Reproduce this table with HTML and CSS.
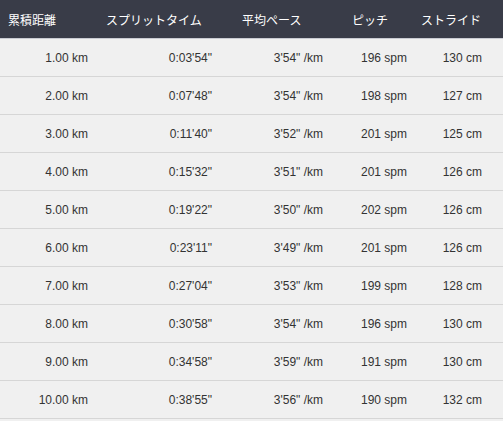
FILE: index.html
```html
<!DOCTYPE html>
<html lang="ja">
<head>
<meta charset="utf-8">
<link rel="stylesheet" href="styles.css">
</head>
<body>
<div class="table">
  <div class="row head">
    <div class="c c1">累積距離</div>
    <div class="c c2">スプリットタイム</div>
    <div class="c c3">平均ペース</div>
    <div class="c c4">ピッチ</div>
    <div class="c c5">ストライド</div>
  </div>
  <div class="row"><div class="c c1">1.00 km</div><div class="c c2">0:03'54"</div><div class="c c3">3'54" /km</div><div class="c c4">196 spm</div><div class="c c5">130 cm</div></div>
  <div class="row"><div class="c c1">2.00 km</div><div class="c c2">0:07'48"</div><div class="c c3">3'54" /km</div><div class="c c4">198 spm</div><div class="c c5">127 cm</div></div>
  <div class="row"><div class="c c1">3.00 km</div><div class="c c2">0:11'40"</div><div class="c c3">3'52" /km</div><div class="c c4">201 spm</div><div class="c c5">125 cm</div></div>
  <div class="row"><div class="c c1">4.00 km</div><div class="c c2">0:15'32"</div><div class="c c3">3'51" /km</div><div class="c c4">201 spm</div><div class="c c5">126 cm</div></div>
  <div class="row"><div class="c c1">5.00 km</div><div class="c c2">0:19'22"</div><div class="c c3">3'50" /km</div><div class="c c4">202 spm</div><div class="c c5">126 cm</div></div>
  <div class="row"><div class="c c1">6.00 km</div><div class="c c2">0:23'11"</div><div class="c c3">3'49" /km</div><div class="c c4">201 spm</div><div class="c c5">126 cm</div></div>
  <div class="row"><div class="c c1">7.00 km</div><div class="c c2">0:27'04"</div><div class="c c3">3'53" /km</div><div class="c c4">199 spm</div><div class="c c5">128 cm</div></div>
  <div class="row"><div class="c c1">8.00 km</div><div class="c c2">0:30'58"</div><div class="c c3">3'54" /km</div><div class="c c4">196 spm</div><div class="c c5">130 cm</div></div>
  <div class="row"><div class="c c1">9.00 km</div><div class="c c2">0:34'58"</div><div class="c c3">3'59" /km</div><div class="c c4">191 spm</div><div class="c c5">130 cm</div></div>
  <div class="row"><div class="c c1">10.00 km</div><div class="c c2">0:38'55"</div><div class="c c3">3'56" /km</div><div class="c c4">190 spm</div><div class="c c5">132 cm</div></div>
</div>
</body>
</html>
```
FILE: styles.css
```css
html, body {
  margin: 0;
  padding: 0;
  background: #f0f0f0;
}
body {
  font-family: "Liberation Sans", Arial, "Noto Sans CJK JP", sans-serif;
  font-size: 12px;
  color: #333333;
}
.table {
  width: 503px;
}
.row {
  display: grid;
  grid-template-columns: 98px 136px 110px 69px 90px;
  height: 37px;
  align-items: center;
  border-bottom: 1px solid #d6d6d6;
  background: #f0f0f0;
}
.row.head {
  height: 38px;
  background: #393c48;
  color: #ffffff;
  border-bottom: 1px solid #c9cbd2;
  font-size: 12px;
  font-family: "Noto Sans CJK JP", sans-serif;
}
.c {
  text-align: right;
  white-space: nowrap;
}
.head .c {
  text-align: left;
}
.c1 { padding-right: 10px; }
.c2 { padding-right: 22px; }
.c3 { padding-right: 21px; }
.c4 { padding-right: 6px; }
.c5 { padding-right: 21px; }
.head .c1 { padding-left: 8px; padding-right: 0; }
.head .c2 { padding-left: 8px; padding-right: 0; }
.head .c3 { padding-left: 8px; padding-right: 0; }
.head .c4 { padding-left: 8px; padding-right: 0; }
.head .c5 { padding-left: 8px; padding-right: 0; }
```
